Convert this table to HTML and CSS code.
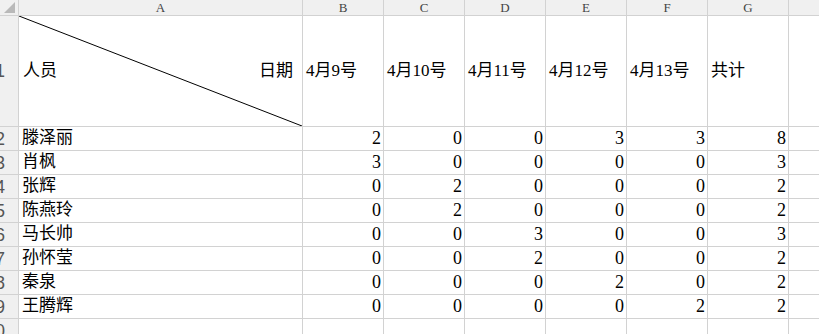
FILE: index.html
```html
<!DOCTYPE html>
<html lang="zh-CN">
<head>
    <meta charset="UTF-8">
    <meta name="viewport" content="width=device-width, initial-scale=1.0">
    <title>出勤统计</title>
    <link rel="stylesheet" href="styles.css">
</head>
<body>
    <div class="sheet">
        <!-- column headers -->
        <div class="head corner"><span class="tri"></span></div>
        <div class="head col">A</div>
        <div class="head col">B</div>
        <div class="head col">C</div>
        <div class="head col">D</div>
        <div class="head col">E</div>
        <div class="head col">F</div>
        <div class="head col">G</div>
        <div class="head col"></div>

        <!-- row 1: title row with the split cell -->
        <div class="head rownum mid"><span>1</span></div>
        <div class="cell split">
            <svg class="slash" viewBox="0 0 100 100" preserveAspectRatio="none">
                <line x1="0" y1="0" x2="100" y2="100" stroke="#000" stroke-width="1" vector-effect="non-scaling-stroke"/>
            </svg>
            <span>人员</span>
            <span>日期</span>
        </div>
        <div class="cell mid">4月9号</div>
        <div class="cell mid">4月10号</div>
        <div class="cell mid">4月11号</div>
        <div class="cell mid">4月12号</div>
        <div class="cell mid">4月13号</div>
        <div class="cell mid">共计</div>
        <div class="cell"></div>

        <div class="head rownum"><span>2</span></div>
        <div class="cell">滕泽丽</div>
        <div class="cell num">2</div><div class="cell num">0</div><div class="cell num">0</div><div class="cell num">3</div><div class="cell num">3</div><div class="cell num">8</div>
        <div class="cell"></div>

        <div class="head rownum"><span>3</span></div>
        <div class="cell">肖枫</div>
        <div class="cell num">3</div><div class="cell num">0</div><div class="cell num">0</div><div class="cell num">0</div><div class="cell num">0</div><div class="cell num">3</div>
        <div class="cell"></div>

        <div class="head rownum"><span>4</span></div>
        <div class="cell">张辉</div>
        <div class="cell num">0</div><div class="cell num">2</div><div class="cell num">0</div><div class="cell num">0</div><div class="cell num">0</div><div class="cell num">2</div>
        <div class="cell"></div>

        <div class="head rownum"><span>5</span></div>
        <div class="cell">陈燕玲</div>
        <div class="cell num">0</div><div class="cell num">2</div><div class="cell num">0</div><div class="cell num">0</div><div class="cell num">0</div><div class="cell num">2</div>
        <div class="cell"></div>

        <div class="head rownum"><span>6</span></div>
        <div class="cell">马长帅</div>
        <div class="cell num">0</div><div class="cell num">0</div><div class="cell num">3</div><div class="cell num">0</div><div class="cell num">0</div><div class="cell num">3</div>
        <div class="cell"></div>

        <div class="head rownum"><span>7</span></div>
        <div class="cell">孙怀莹</div>
        <div class="cell num">0</div><div class="cell num">0</div><div class="cell num">2</div><div class="cell num">0</div><div class="cell num">0</div><div class="cell num">2</div>
        <div class="cell"></div>

        <div class="head rownum"><span>8</span></div>
        <div class="cell">秦泉</div>
        <div class="cell num">0</div><div class="cell num">0</div><div class="cell num">0</div><div class="cell num">2</div><div class="cell num">0</div><div class="cell num">2</div>
        <div class="cell"></div>

        <div class="head rownum"><span>9</span></div>
        <div class="cell">王腾辉</div>
        <div class="cell num">0</div><div class="cell num">0</div><div class="cell num">0</div><div class="cell num">0</div><div class="cell num">2</div><div class="cell num">2</div>
        <div class="cell"></div>

        <div class="head rownum top"><span>10</span></div>
        <div class="cell"></div>
        <div class="cell"></div><div class="cell"></div><div class="cell"></div><div class="cell"></div><div class="cell"></div><div class="cell"></div>
        <div class="cell"></div>
    </div>
</body>
</html>
```

FILE: styles.css
```css
body {
    margin: 0;
    background: #fff;
    overflow: hidden;
}

.sheet {
    display: grid;
    grid-template-columns: 18px 283px repeat(6, 80px) 1fr;
    grid-template-rows: 15px 110px repeat(8, 23px) 40px;
    gap: 1px;
    background: #d2d2d2;
    width: 819px;
    height: 334px;
    overflow: hidden;
    font-family: "Liberation Serif", "Noto Sans CJK SC", serif;
    font-size: 17px;
    color: #000;
}

.head {
    background: #f0f0f0;
    color: #444;
    font-size: 13px;
    overflow: hidden;
}

.col {
    display: flex;
    align-items: center;
    justify-content: center;
    line-height: 15px;
}

.corner {
    position: relative;
}

/* the little select-all triangle */
.tri {
    position: absolute;
    right: 3px;
    bottom: 2px;
    width: 11px;
    height: 11px;
    background: #b9b9b9;
    clip-path: polygon(100% 0, 100% 100%, 0 100%);
}

/* row numbers sit half outside the visible strip */
.rownum {
    display: flex;
    justify-content: flex-end;
    align-items: flex-end;
    padding-right: 13px;
    font-family: "Liberation Sans", sans-serif;
    font-size: 18px;
    line-height: 22px;
    color: #555;
}

.rownum.mid {
    align-items: center;
}

.rownum.top {
    align-items: flex-start;
    padding-top: 1px;
}

.cell {
    background: #fff;
    display: flex;
    align-items: flex-end;
    padding: 0 3px 1px;
    line-height: 22px;
    white-space: nowrap;
    overflow: hidden;
}

.cell.mid {
    align-items: center;
}

.num {
    justify-content: flex-end;
    padding-right: 2px;
    font-size: 18px;
}

.split {
    position: relative;
    align-items: center;
    justify-content: space-between;
    padding: 0 9px 0 4px;
    overflow: visible;
}

.slash {
    position: absolute;
    left: 0;
    top: 0;
    width: 100%;
    height: 100%;
}
```
